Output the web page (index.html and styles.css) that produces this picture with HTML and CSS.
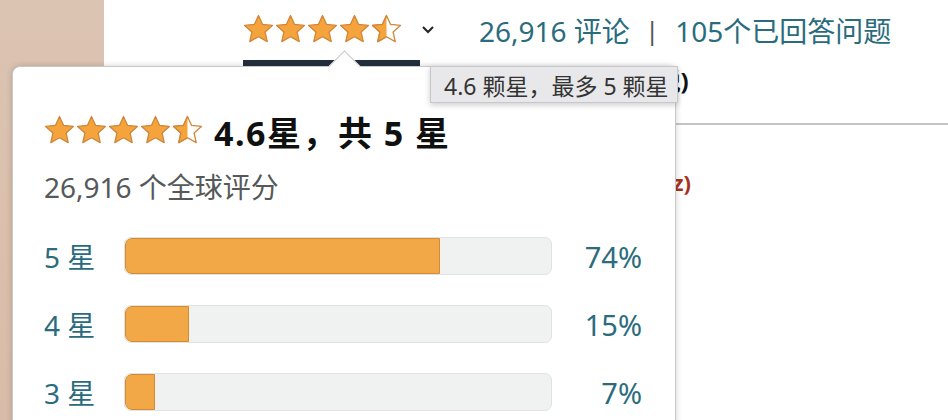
FILE: index.html
```html
<!DOCTYPE html>
<html lang="zh">

<head>
    <meta charset="utf-8">
    <title>评分</title>
    <link rel="stylesheet" href="styles.css">
</head>

<body>
<div id="app">
    <div class="side"></div>
    <div class="main">
        <div class="rating-bar">
            <span class="stars stars-head">
                <svg viewBox="0 0 160 32" width="160" height="32">
                    <defs>
                        <path id="star" d="M15.5 1.5 L19.6 10.4 L29.4 11.4 L22.1 18 L24.2 27.6 L15.5 22.7 L6.8 27.6 L8.9 18 L1.6 11.4 L11.4 10.4 Z"/>
                        <clipPath id="half"><rect x="0" y="0" width="15.5" height="32"/></clipPath>
                    </defs>
                    <use href="#star" x="0" class="full"/>
                    <use href="#star" x="32" class="full"/>
                    <use href="#star" x="64" class="full"/>
                    <use href="#star" x="96" class="full"/>
                    <use href="#star" x="128" class="empty"/>
                    <g transform="translate(128 0)"><use href="#star" class="full" clip-path="url(#half)"/></g>
                </svg>
            </span>
            <svg class="chevron" viewBox="0 0 14 10" width="14" height="10">
                <path d="M2 2 L7 7 L12 2" fill="none" stroke="#222" stroke-width="2"/>
            </svg>
            <a class="link" href="#">26,916 评论</a>
            <span class="pipe">|</span>
            <a class="link" href="#">105个已回答问题</a>
        </div>
        <div class="tab-line"></div>
        <div class="under-row"><span class="bold-text">价格 (含税)</span></div>
        <div class="section">
            <div class="red-text">(xyz)</div>
        </div>
    </div>

    <div class="popover">
        <div class="popover-arrow"></div>
        <div class="popover-head">
            <svg viewBox="0 0 160 32" width="160" height="32">
                <use href="#star" x="0" class="full"/>
                <use href="#star" x="32" class="full"/>
                <use href="#star" x="64" class="full"/>
                <use href="#star" x="96" class="full"/>
                <use href="#star" x="128" class="empty"/>
                <g transform="translate(128 0)"><use href="#star" class="full" clip-path="url(#half)"/></g>
            </svg>
            <span class="popover-title">4.6星，共 5 星</span>
        </div>
        <div class="popover-sub">26,916 个全球评分</div>
        <div class="histogram">
            <div class="row">
                <a class="label" href="#">5 星</a>
                <div class="meter"><div class="fill" style="width: 74%"></div></div>
                <a class="pct" href="#">74%</a>
            </div>
            <div class="row">
                <a class="label" href="#">4 星</a>
                <div class="meter"><div class="fill" style="width: 15%"></div></div>
                <a class="pct" href="#">15%</a>
            </div>
            <div class="row">
                <a class="label" href="#">3 星</a>
                <div class="meter"><div class="fill" style="width: 7%"></div></div>
                <a class="pct" href="#">7%</a>
            </div>
        </div>
    </div>

    <div class="tooltip">4.6 颗星，最多 5 颗星</div>
</div>
</body>

</html>
```

FILE: styles.css
```css
body {
    margin: 0;
}

#app {
    font-family: "Noto Sans", "Noto Sans CJK SC", sans-serif;
    color: #0f1111;
    width: 948px;
    height: 420px;
    overflow: hidden;
    display: flex;
    position: relative;
    background: #fff;
}

a {
    text-decoration: none;
}

.side {
    width: 104px;
    flex: none;
    background: linear-gradient(180deg, #dcc4b2 0%, #d8bca8 100%);
}

.main {
    flex: 1;
    display: flex;
    flex-direction: column;
}

.rating-bar {
    display: flex;
    align-items: center;
    height: 60px;
    padding-left: 139px;
}

.rating-bar .stars {
    display: flex;
}

.full {
    fill: #f4a33d;
    stroke: #d08638;
    stroke-width: 1.3;
    stroke-linejoin: round;
}

.empty {
    fill: #fff;
    stroke: #d08638;
    stroke-width: 1.3;
    stroke-linejoin: round;
}

.rating-bar .chevron {
    margin-left: 18px;
    margin-right: 44px;
}

.rating-bar .link {
    color: #2a6c7d;
    font-size: 28px;
}

.rating-bar .pipe {
    color: #555;
    font-size: 26px;
    margin: 0 16px 0 15px;
}

.tab-line {
    margin-left: 139px;
    width: 177px;
    height: 6px;
    background: #232f3e;
}

.under-row {
    height: 26px;
    display: flex;
    align-items: center;
    padding-left: 466px;
}

.bold-text {
    font-weight: 700;
    font-size: 24px;
}

.section {
    margin-top: 31px;
    border-top: 2px solid #c4c4c4;
    padding-top: 42px;
    padding-left: 536px;
}

.red-text {
    color: #a8321c;
    font-weight: 700;
    font-size: 22px;
}

.popover {
    position: absolute;
    left: 12px;
    top: 66px;
    width: 664px;
    height: 400px;
    background: #fff;
    border: 1px solid #c9c9c9;
    border-radius: 8px;
    box-shadow: 0 0 6px rgba(0, 0, 0, 0.18);
    padding: 44px 0 0 31px;
    box-sizing: border-box;
}

.popover-arrow {
    position: absolute;
    left: 320px;
    top: -12px;
    width: 22px;
    height: 22px;
    background: #fff;
    border-left: 1px solid #c9c9c9;
    border-top: 1px solid #c9c9c9;
    transform: rotate(45deg);
}

.popover-head {
    display: flex;
    align-items: center;
    gap: 10px;
    height: 40px;
}

.popover-title {
    font-size: 34px;
    letter-spacing: 1.5px;
    font-weight: 700;
    color: #0f1111;
}

.popover-sub {
    margin-top: 18px;
    font-size: 28px;
    line-height: 36px;
    color: #565959;
}

.histogram {
    margin-top: 32px;
    display: flex;
    flex-direction: column;
    gap: 30px;
}

.row {
    display: flex;
    align-items: center;
    height: 38px;
}

.row .label {
    width: 80px;
    color: #2a6c7d;
    font-size: 28px;
}

.meter {
    width: 428px;
    height: 38px;
    box-sizing: border-box;
    background: #f0f2f2;
    border: 1px solid #e0e3e3;
    border-radius: 7px;
    overflow: hidden;
}

.fill {
    height: 100%;
    box-sizing: border-box;
    background: #f3a847;
    border: 1px solid #d58b32;
    border-radius: 7px 0 0 7px;
}

.row .pct {
    width: 90px;
    text-align: right;
    color: #2a6c7d;
    font-size: 29px;
}

.tooltip {
    position: absolute;
    left: 430px;
    top: 66px;
    width: 248px;
    height: 37px;
    box-sizing: border-box;
    background: #e8e8ea;
    border: 1px solid #c8c8ca;
    box-shadow: 0 2px 6px rgba(0, 0, 0, 0.2);
    padding-left: 13px;
    display: flex;
    align-items: center;
    font-size: 23px;
    color: #333;
}
```
